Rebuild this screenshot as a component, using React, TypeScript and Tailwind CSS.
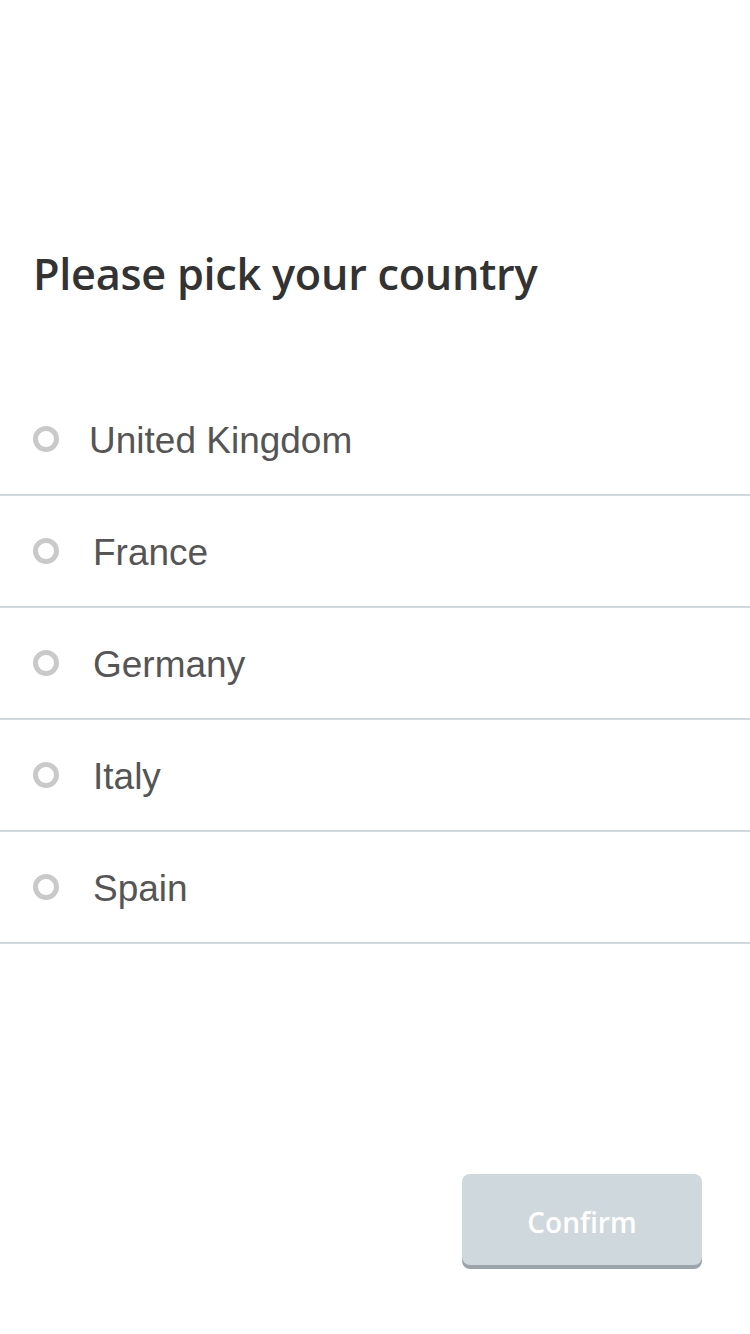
const countries = ['United Kingdom', 'France', 'Germany', 'Italy', 'Spain']

export default function App() {
  return (
    <div className="w-[750px] h-[1334px] bg-white flex flex-col" style={{ fontFamily: "'Liberation Sans', Arial, sans-serif" }}>
      {/* Title */}
      <h1 className="pt-[246px] px-[33px] text-[43.3px] leading-[56px] font-semibold text-[#333333] [font-family:'Open_Sans',sans-serif] tracking-[-0.3px]">
        Please pick your country
      </h1>

      {/* Options */}
      <div className="mt-[82px] flex flex-col">
        {countries.map((c, i) => (
          <label key={c} className="flex items-center h-[112px] border-b-2 border-[#d0d9de] pl-[33px] cursor-pointer">
            <span className="w-[26px] h-[26px] rounded-full border-[5px] border-[#c9c9c9] shrink-0" />
            <span className={`${i === 0 ? 'ml-[30px]' : 'ml-[34px]'} pt-[3px] text-[37px] leading-[44px] text-[#555555]`}>{c}</span>
          </label>
        ))}
      </div>

      {/* Confirm */}
      <div className="flex-1" />
      <div className="flex justify-end pr-[48px] pb-[69px]">
        <button className="w-[240px] h-[91px] pt-[4px] rounded-[8px] bg-[#cfd8dd] shadow-[0_4px_0_#9aa5ab] text-white text-[28px] font-semibold [font-family:'Open_Sans',sans-serif]">
          Confirm
        </button>
      </div>
    </div>
  )
}
